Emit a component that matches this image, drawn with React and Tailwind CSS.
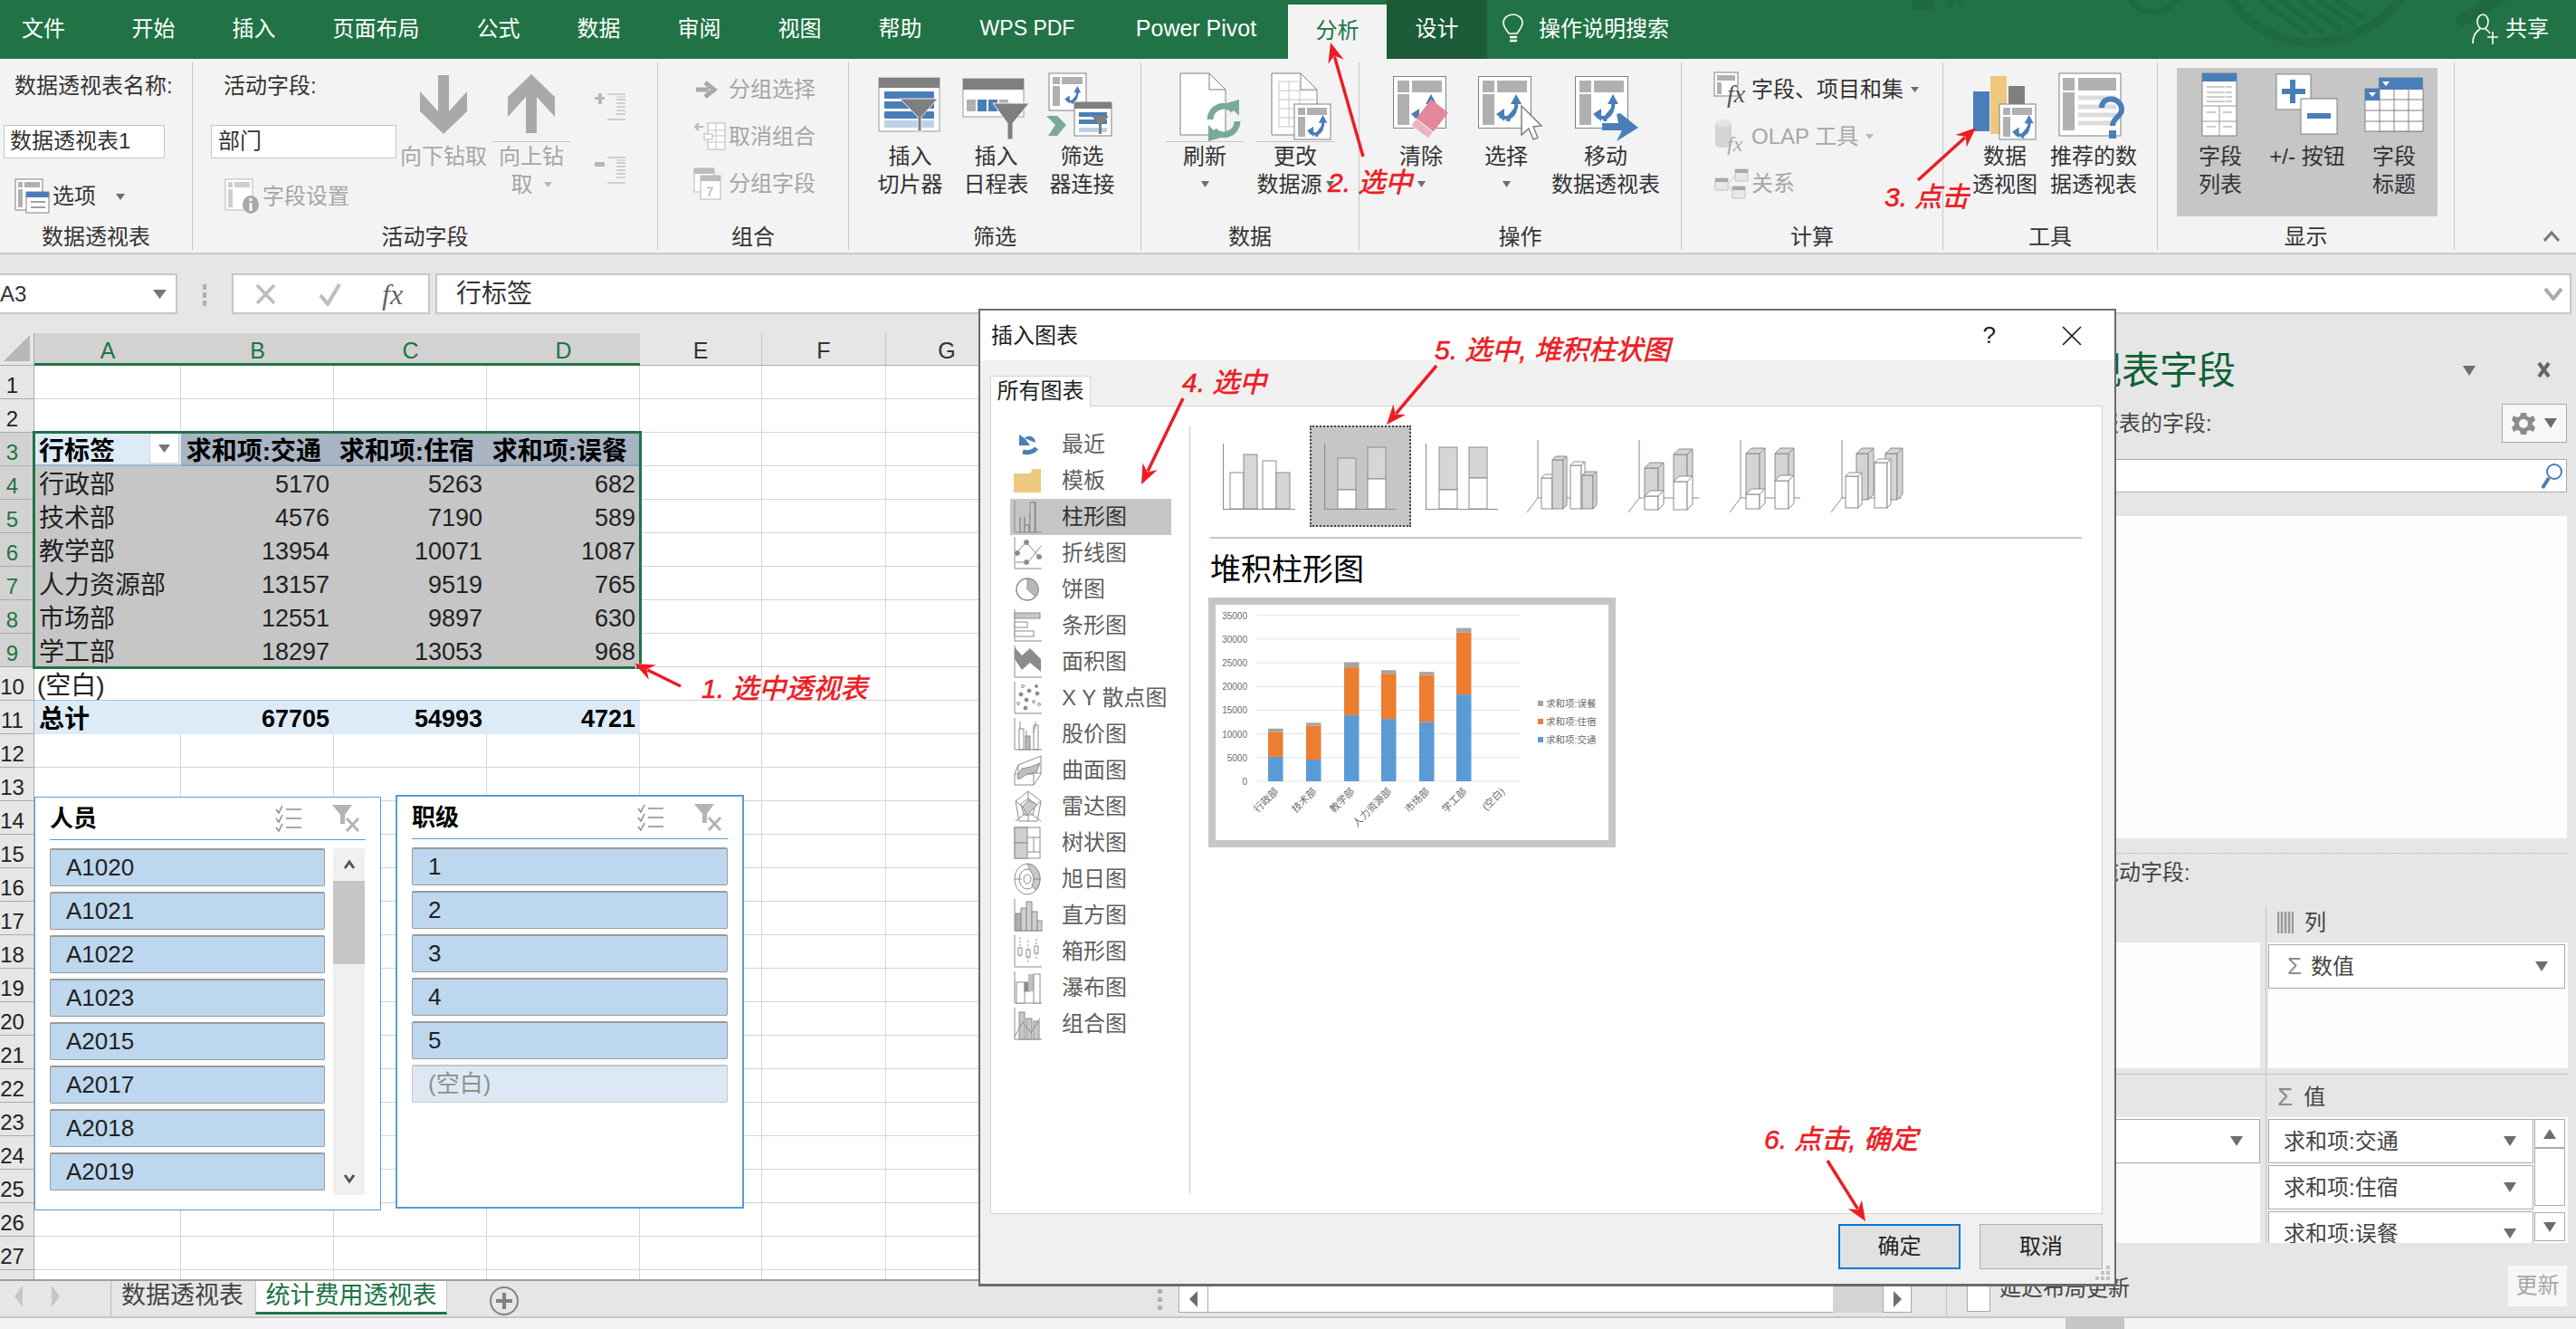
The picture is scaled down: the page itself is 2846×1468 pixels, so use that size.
const blue = "#4a7eb8";
const gr = "#808080";

const Caret = ({ w = 12, h = 8, c = "#6d6d6d" }) => (
  <svg width={w} height={h} className="shrink-0">
    <polygon points={`0,0 ${w},0 ${w / 2},${h}`} fill={c} />
  </svg>
);

// the blue swap arrows used on most pivot icons
const Swap = ({ x = 0, y = 0, s = 1 }) => (
  <g transform={`translate(${x},${y}) scale(${s})`} fill="none" stroke={blue} strokeWidth="4">
    <path d="M22 10 C24 20 14 20 13 30" />
    <path d="M4 24 C12 28 18 26 21 18" />
    <polygon points="16,11 22,0 28,11" fill={blue} stroke="none" />
    <polygon points="0,22 9,16 9,30" fill={blue} stroke="none" />
  </g>
);

const PivotDoc = ({ x = 0, y = 0 }) => (
  <g transform={`translate(${x},${y})`}>
    <rect x="0.5" y="0.5" width="58" height="57" fill="#fff" stroke={gr} />
    <rect x="5" y="5" width="13" height="13" fill="#b0b0b0" />
    <rect x="21" y="5" width="33" height="13" fill="#b0b0b0" />
    <rect x="5" y="20" width="13" height="34" fill="#b0b0b0" />
  </g>
);

const Ico = {
  options: (
    <svg width="40" height="40">
      <rect x="1" y="1" width="30" height="34" fill="#fff" stroke={gr} />
      <rect x="4" y="4" width="5" height="6" fill="#b0b0b0" />
      <rect x="11" y="4" width="17" height="6" fill="#b0b0b0" />
      <rect x="4" y="12" width="5" height="20" fill="#b0b0b0" />
      <rect x="13" y="15" width="25" height="23" fill="#fff" stroke={gr} />
      <rect x="13" y="15" width="25" height="6" fill={blue} />
      <path d="M18 26h16M18 32h16" stroke={gr} strokeWidth="1.5" />
    </svg>
  ),
  fieldSet: (
    <svg width="40" height="40">
      <rect x="1" y="1" width="30" height="34" fill="#fff" stroke="#b8b8b8" />
      <rect x="4" y="4" width="5" height="6" fill="#cfcfcf" />
      <rect x="11" y="4" width="17" height="6" fill="#cfcfcf" />
      <rect x="4" y="12" width="5" height="20" fill="#cfcfcf" />
      <ellipse cx="29" cy="29" rx="9" ry="10" fill="#a9a9a9" />
      <rect x="27.5" y="27" width="3" height="9" fill="#fff" />
      <rect x="27.5" y="22" width="3" height="3" fill="#fff" />
    </svg>
  ),
  down: (
    <svg width="54" height="66">
      <polygon points="21,0 33,0 33,40 53,18 53,40 27,65 1,40 1,18 21,40" fill="#a9a9ab" />
    </svg>
  ),
  up: (
    <svg width="54" height="66">
      <polygon points="21,65 33,65 33,25 53,47 53,25 27,0 1,25 1,47 21,25" fill="#a9a9ab" />
    </svg>
  ),
  tree: (minus) => (
    <svg width="36" height="32">
      <rect x="0" y={minus ? 6 : 4} width="11" height={minus ? 5 : 3} fill="#b8b8b8" />
      {!minus && <rect x="4" y="0" width="4" height="12" fill="#b8b8b8" />}
      <path d="M14 1h20M24 7h10M24 11h10M24 15h10M24 19h10M24 23h10M14 29h20" stroke="#c4c4c4" strokeWidth="1.5" />
      <path d="M24 4h10" stroke="#c4c4c4" />
    </svg>
  ),
  slicer: (
    <svg width="72" height="62">
      <rect x="1" y="1" width="67" height="59" fill="#fff" stroke="#9a9a9a" />
      <rect x="1" y="1" width="67" height="11" fill="#7f7f7f" />
      <rect x="7" y="16" width="55" height="8" rx="1" fill={blue} />
      <rect x="7" y="27" width="55" height="8" rx="1" fill={blue} />
      <rect x="7" y="38" width="55" height="8" rx="1" fill={blue} />
      <rect x="7" y="48" width="55" height="8" fill="#bdd0e6" />
      <polygon points="24,24 66,24 48,44 48,60 44,60 44,44" fill="#7f7f7f" stroke="#f3f3f3" />
    </svg>
  ),
  timeline: (
    <svg width="76" height="70">
      <rect x="1" y="1" width="67" height="42" fill="#fff" stroke="#9a9a9a" />
      <rect x="1" y="1" width="67" height="12" fill="#7f7f7f" />
      <rect x="5" y="24" width="10" height="13" fill="#b0b0b0" />
      <rect x="17" y="24" width="10" height="13" fill={blue} />
      <rect x="29" y="24" width="10" height="13" fill={blue} />
      <rect x="41" y="24" width="10" height="13" fill="#b0b0b0" />
      <polygon points="34,28 74,28 56,50 56,68 50,68 50,50" fill="#7f7f7f" stroke="#f3f3f3" />
    </svg>
  ),
  filterConn: (
    <svg width="76" height="72">
      <rect x="5" y="1" width="41" height="41" fill="#fff" stroke={gr} />
      <rect x="9" y="5" width="8" height="8" fill="#b0b0b0" />
      <rect x="19" y="5" width="23" height="8" fill="#b0b0b0" />
      <rect x="9" y="15" width="8" height="22" fill="#b0b0b0" />
      <Swap x="22" y="15" s="0.65" />
      <rect x="33" y="33" width="41" height="37" fill="#fff" stroke={gr} />
      <rect x="33" y="33" width="41" height="7" fill="#7f7f7f" />
      <rect x="38" y="44" width="31" height="5" fill={blue} />
      <rect x="38" y="52" width="31" height="5" fill={blue} />
      <rect x="38" y="61" width="31" height="5" fill="#bdd0e6" />
      <polygon points="52,48 71,48 63,58 63,68 60,68 60,58" fill="#7f7f7f" />
      <path d="M2 48h12l10 10-10 12H4l8-12-10-10z" fill="#7aa99a" />
    </svg>
  ),
  refresh: (
    <svg width="68" height="76">
      <path d="M1 1h32l18 18v50H1z" fill="#fff" stroke={gr} />
      <path d="M33 1v18h18" fill="none" stroke={gr} />
      <g fill="none" stroke="#7aa99a" strokeWidth="7">
        <path d="M34 52a15 15 0 0 1 26-10" />
        <path d="M64 54a15 15 0 0 1-26 10" />
      </g>
      <polygon points="52,34 66,30 66,48" fill="#7aa99a" />
      <polygon points="46,72 32,76 32,58" fill="#7aa99a" />
    </svg>
  ),
  changeSrc: (
    <svg width="68" height="76">
      <path d="M1 1h32l18 18v50H1z" fill="#fff" stroke={gr} />
      <path d="M33 1v18h18" fill="none" stroke={gr} />
      <path d="M9 10h24M9 20h40M9 30h40M9 40h40M9 50h40M9 60h40M9 10v50M20 10v50M32 10v50" stroke="#c4c4c4" />
      <rect x="26" y="35" width="40" height="39" fill="#fff" stroke={gr} />
      <rect x="30" y="39" width="8" height="8" fill="#b0b0b0" />
      <rect x="40" y="39" width="22" height="8" fill="#b0b0b0" />
      <rect x="30" y="49" width="8" height="22" fill="#b0b0b0" />
      <Swap x="40" y="47" s="0.8" />
    </svg>
  ),
  clear: (
    <svg width="72" height="72">
      <PivotDoc />
      <Swap x="20" y="20" />
      <g transform="translate(50,32) rotate(38)">
        <rect x="-10" y="0" width="24" height="36" fill="#e5879a" />
        <rect x="-10" y="27" width="24" height="9" fill="#eab3bf" stroke="#f3f3f3" />
      </g>
    </svg>
  ),
  select: (
    <svg width="72" height="72">
      <PivotDoc />
      <Swap x="20" y="20" />
      <path d="M48 33v32l8-7 5 12 5-2-5-12 9-1z" fill="#fff" stroke={gr} strokeWidth="1.5" />
    </svg>
  ),
  move: (
    <svg width="72" height="72">
      <PivotDoc />
      <Swap x="20" y="20" />
      <polygon points="30,52 48,52 46,42 50,41 70,57 46,72 52,60 30,60" fill={blue} />
    </svg>
  ),
  groupSel: (
    <svg width="34" height="28">
      <path d="M2 14h14M12 6l10 8-10 8" fill="none" stroke="#a9a9a9" strokeWidth="5" />
    </svg>
  ),
  ungroup: (
    <svg width="36" height="32">
      <path d="M2 5h9M6 1 2 5l4 4" fill="none" stroke="#b8b8b8" strokeWidth="2" />
      <rect x="16" y="1" width="19" height="29" fill="#fff" stroke="#b8b8b8" />
      <path d="M16 9h19M16 15h19M16 22h19M25 1v29" stroke="#c4c4c4" />
      <rect x="12" y="13" width="9" height="6" fill="#fff" stroke="#b8b8b8" />
    </svg>
  ),
  groupField: (
    <svg width="36" height="36">
      <rect x="1" y="1" width="22" height="26" fill="#fff" stroke="#b8b8b8" />
      <rect x="1" y="1" width="22" height="6" fill="#bcbcbc" />
      <rect x="8" y="9" width="22" height="26" fill="#fff" stroke="#b8b8b8" />
      <rect x="8" y="9" width="22" height="6" fill="#bcbcbc" />
      <text x="14" y="32" fontSize="15" fill="#a9a9a9" className="font-['Liberation_Sans']">7</text>
    </svg>
  ),
  fieldSetFx: (
    <svg width="42" height="40">
      <rect x="1" y="1" width="26" height="26" fill="#fff" stroke={gr} />
      <rect x="4" y="4" width="20" height="6" fill="#b0b0b0" />
      <rect x="4" y="12" width="5" height="13" fill="#b0b0b0" />
      <text x="15" y="34" fontSize="28" fontStyle="italic" fill="#555" className="font-['Liberation_Serif']">fx</text>
    </svg>
  ),
  olap: (
    <svg width="42" height="40">
      <path d="M2 5v24c0 4 18 4 18 0V5z" fill="#d4d4d4" />
      <ellipse cx="11" cy="5" rx="9" ry="4" fill="#e4e4e4" />
      <text x="15" y="36" fontSize="24" fontStyle="italic" fill="#a9a9a9" className="font-['Liberation_Serif']">fx</text>
    </svg>
  ),
  relation: (
    <svg width="40" height="34">
      <rect x="1" y="11" width="14" height="13" fill="#e8e8e8" stroke="#c4c4c4" />
      <rect x="23" y="1" width="14" height="13" fill="#e8e8e8" stroke="#c4c4c4" />
      <rect x="20" y="20" width="14" height="13" fill="#e8e8e8" stroke="#c4c4c4" />
      <rect x="23" y="1" width="14" height="4" fill="#a9a9a9" />
      <rect x="20" y="20" width="14" height="4" fill="#a9a9a9" />
      <rect x="1" y="11" width="14" height="4" fill="#a9a9a9" />
      <path d="M15 17 23 8M15 18l5 8" stroke="#c4c4c4" />
    </svg>
  ),
  pivotChart: (
    <svg width="72" height="74">
      <rect x="1" y="20" width="18" height="44" transform="translate(0,-2)" fill={blue} />
      <rect x="20" y="1" width="18" height="64" fill="#edc87e" />
      <rect x="40" y="12" width="18" height="34" fill="#7f7f7f" />
      <rect x="30" y="32" width="40" height="39" fill="#fff" stroke={gr} />
      <rect x="34" y="36" width="8" height="8" fill="#b0b0b0" />
      <rect x="44" y="36" width="22" height="8" fill="#b0b0b0" />
      <rect x="34" y="46" width="8" height="22" fill="#b0b0b0" />
      <Swap x="44" y="44" s="0.85" />
    </svg>
  ),
  recommend: (
    <svg width="78" height="76">
      <rect x="1" y="1" width="68" height="69" fill="#fff" stroke={gr} />
      <rect x="5" y="6" width="13" height="14" fill="#b0b0b0" />
      <rect x="22" y="6" width="42" height="14" fill="#b0b0b0" />
      <rect x="5" y="22" width="13" height="42" fill="#b0b0b0" />
      <path d="M22 28h42M22 38h42M22 47h42M22 56h42" stroke="#dcdcdc" strokeWidth="5" />
      <path d="M48 39c0-14 22-12 22 2 0 8-10 9-10 18" fill="none" stroke={blue} strokeWidth="6" />
      <rect x="56" y="64" width="8" height="9" fill={blue} />
    </svg>
  ),
  fieldList: (
    <svg width="42" height="72">
      <rect x="1" y="1" width="38" height="69" fill="#fff" stroke={gr} />
      <rect x="1" y="1" width="38" height="9" fill={blue} />
      <path d="M6 16h28M6 22h28M6 27h28M6 32h28" stroke="#9a9a9a" strokeDasharray="20 1" />
      <path d="M1 37h38M1 54h38M20 37v33M6 44h10M24 44h10M6 60h10M24 60h10" stroke="#9a9a9a" />
    </svg>
  ),
  plusMinus: (
    <svg width="70" height="70">
      <rect x="1" y="1" width="38" height="39" fill="#fff" stroke={gr} />
      <rect x="7" y="17" width="26" height="6" fill={blue} />
      <rect x="16" y="7" width="6" height="26" fill={blue} />
      <rect x="28" y="28" width="40" height="39" fill="#fff" stroke={gr} />
      <rect x="35" y="44" width="26" height="6" fill={blue} />
    </svg>
  ),
  fieldHead: (
    <svg width="66" height="62">
      <rect x="16.5" y="1" width="48" height="59" fill="#fff" stroke={gr} />
      <rect x="1" y="13" width="64" height="47" fill="#fff" stroke={gr} />
      <path d="M17 13v47M33 13v47M49 13v47M1 25h64M1 37h64M1 49h64" stroke={gr} />
      <rect x="16.5" y="1" width="48" height="13" fill={blue} />
      <rect x="1" y="13" width="16" height="13" fill={blue} />
      <polygon points="20,5 28,5 24,10" fill="#fff" />
      <polygon points="5,17 13,17 9,22" fill="#fff" />
    </svg>
  ),
};

const Group = ({ label, className, children, inner = "flex" }) => (
  <div className={`flex flex-col h-[207px] border-r border-[#c6c6c6] shrink-0 ${className}`}>
    <div className={`h-[179px] ${inner}`}>{children}</div>
    <div className="h-[28px] leading-[28px] text-center text-[24px] text-[#333]">{label}</div>
  </div>
);

const Big = ({ icon, lines, w, off, line, iconH = "h-[88px]", drop = "" }) => (
  <div className={`flex flex-col items-center shrink-0 ${w}`}>
    <div className={`${iconH} flex items-center justify-center w-full relative`}>
      <div className={`relative ${drop}`}>{icon}</div>
      {line && <div className={`absolute bottom-0 h-[1px] bg-[#c6c6c6] ${line}`} />}
    </div>
    <div className={`text-[24px] leading-[31px] text-center whitespace-nowrap ${off ? "text-[#a6a6a6]" : "text-[#333]"}`}>
      {lines.map((l, i) => (
        <div key={i} className="h-[31px] flex items-center justify-center gap-[12px]">{l}</div>
      ))}
    </div>
  </div>
);

const SmallRow = ({ icon, text, off, iconW = "w-[38px]", caret }) => (
  <div className={`h-[52px] flex items-center text-[24px] whitespace-nowrap ${off ? "text-[#a6a6a6]" : "text-[#333]"}`}>
    <div className={`${iconW} flex justify-center shrink-0`}>{icon}</div>
    <span>{text}</span>
    {caret && <span className="ml-[8px]"><Caret w={9} h={6} c={off ? "#b8b8b8" : "#6d6d6d"} /></span>}
  </div>
);

function Ribbon() {
  return (
    <div className="h-[216px] bg-[#f3f3f3] border-b-2 border-[#c9c9c9] flex pt-[4px] shrink-0">
      <Group label="数据透视表" className="w-[213px]" inner="flex flex-col">
        <div className="h-[52px] pt-[10px] pl-[16px] text-[24px] leading-[31px] text-[#333] whitespace-nowrap">数据透视表名称:</div>
        <div className="ml-[4px] mt-[17px] w-[178px] h-[37px] bg-white border border-[#c6c6c6] pl-[6px] text-[24px] leading-[34px] text-[#333]">数据透视表1</div>
        <div className="flex items-center mt-[22px] pl-[16px] text-[24px] text-[#333]">
          {Ico.options}
          <span className="ml-[2px]">选项</span>
          <span className="ml-[22px]"><Caret w={10} h={7} /></span>
        </div>
      </Group>
      <Group label="活动字段" className="w-[514px]">
        <div className="w-[228px] shrink-0 flex flex-col">
          <div className="h-[52px] pt-[10px] pl-[34px] text-[24px] leading-[31px] text-[#333]">活动字段:</div>
          <div className="ml-[20px] mt-[17px] w-[205px] h-[37px] bg-white border border-[#c6c6c6] pl-[7px] text-[24px] leading-[34px] text-[#333]">部门</div>
          <div className="flex items-center mt-[22px] pl-[35px] text-[24px] text-[#a6a6a6]">
            {Ico.fieldSet}
            <span className="ml-[2px]">字段设置</span>
          </div>
        </div>
        <Big w="w-[98px]" off icon={Ico.down} drop="top-[3px]" lines={["向下钻取"]} />
        <Big w="w-[96px]" off icon={Ico.up} drop="top-[2px]" line="w-[86px]" lines={["向上钻", <>取<Caret w={9} h={6} c="#b8b8b8" /></>]} />
        <div className="flex flex-col gap-[38px] pt-[34px] pl-[22px]">
          {Ico.tree(false)}
          {Ico.tree(true)}
        </div>
      </Group>
      <Group label="组合" className="w-[211px]" inner="flex flex-col pt-[4px] pl-[36px]">
        <SmallRow off icon={Ico.groupSel} text="分组选择" iconW="w-[42px]" />
        <SmallRow off icon={Ico.ungroup} text="取消组合" iconW="w-[42px]" />
        <SmallRow off icon={Ico.groupField} text="分组字段" iconW="w-[42px]" />
      </Group>
      <Group label="筛选" className="w-[323px]" inner="flex pl-[20px]">
        <Big w="w-[95px]" icon={Ico.slicer} drop="top-[3px]" lines={["插入", "切片器"]} />
        <Big w="w-[95px]" icon={Ico.timeline} drop="top-[8px]" lines={["插入", "日程表"]} />
        <Big w="w-[95px]" icon={Ico.filterConn} drop="top-[3px] -left-[4px]" lines={["筛选", "器连接"]} />
      </Group>
      <Group label="数据" className="w-[241px]" inner="flex pl-[20px]">
        <Big w="w-[100px]" icon={Ico.refresh} drop="top-[5px] left-[6px]" line="w-[86px]" lines={["刷新", <Caret w={9} h={7} />]} />
        <Big w="w-[100px]" icon={Ico.changeSrc} drop="top-[5px] left-[7px]" line="w-[88px]" lines={["更改", <span className="flex items-center gap-[4px]">数据源<Caret w={9} h={7} /></span>]} />
      </Group>
      <Group label="操作" className="w-[356px]" inner="flex pl-[21px]">
        <Big w="w-[94px]" icon={Ico.clear} drop="top-[7px] left-[5px]" lines={["清除", <Caret w={9} h={7} />]} />
        <Big w="w-[94px]" icon={Ico.select} drop="top-[7px] left-[5px]" lines={["选择", <Caret w={9} h={7} />]} />
        <Big w="w-[126px]" icon={Ico.move} drop="top-[7px] left-[2px]" lines={["移动", "数据透视表"]} />
      </Group>
      <Group label="计算" className="w-[289px]" inner="flex flex-col pt-[4px] pl-[35px]">
        <SmallRow icon={Ico.fieldSetFx} text="字段、项目和集" iconW="w-[42px]" caret />
        <SmallRow off icon={Ico.olap} text="OLAP 工具" iconW="w-[42px]" caret />
        <SmallRow off icon={Ico.relation} text="关系" iconW="w-[42px]" />
      </Group>
      <Group label="工具" className="w-[237px]" inner="flex pl-[19px]">
        <Big w="w-[98px]" icon={Ico.pivotChart} drop="top-[7px]" lines={["数据", "透视图"]} />
        <Big w="w-[98px]" icon={Ico.recommend} drop="top-[5px]" lines={["推荐的数", "据透视表"]} />
      </Group>
      <Group label="显示" className="w-[328px]" inner="flex pl-[21px]">
        <div className="mt-[6px] w-[288px] h-[164px] bg-[#c6c6c6] flex">
          <Big w="w-[96px]" iconH="h-[82px]" icon={Ico.fieldList} lines={["字段", "列表"]} />
          <Big w="w-[96px]" iconH="h-[82px]" icon={Ico.plusMinus} lines={["+/- 按钮"]} />
          <Big w="w-[96px]" iconH="h-[82px]" icon={Ico.fieldHead} lines={["字段", "标题"]} />
        </div>
      </Group>
      <div className="flex-1 flex items-end justify-end pr-[18px] pb-[12px]">
        <svg width="18" height="12"><path d="M1 11 9 2l8 9" fill="none" stroke="#777" strokeWidth="3" /></svg>
      </div>
    </div>
  );
}

function TabBar() {
  const tabs = ["开始", "插入", "页面布局", "公式", "数据", "审阅", "视图", "帮助"];
  return (
    <div className="h-[65px] bg-[#217346] flex text-white text-[24px] shrink-0 relative overflow-hidden">
      {/* background decoration of the title bar */}
      <svg className="absolute top-0 left-[2050px]" width="796" height="65" fill="none" stroke="#1f6a40">
        <rect x="62" y="-2" width="25" height="13" fill="#1f6a40" stroke="none" />
        <rect x="101" y="-2" width="8" height="10" fill="#1f6a40" stroke="none" />
        <rect x="113" y="-2" width="4" height="8" fill="#1f6a40" stroke="none" />
        <path d="M300 -6C312 20 345 20 358 -6" strokeWidth="6" />
        <path d="M414 -2C440 38 480 47 508 47C540 47 580 30 602 -2" strokeWidth="10" />
        <path d="M447 0 500 38M470 0 518 37M490 0 537 33M510 0 553 28M530 0 563 21" strokeWidth="6" />
        <path d="M665 25 716 -5" strokeWidth="14" />
      </svg>
      <div className="pl-[24px] pr-[42px] leading-[63px]">文件</div>
      {tabs.map((t) => (
        <div key={t} className="px-[31.5px] leading-[63px]">{t}</div>
      ))}
      <div className="w-[170px] text-center leading-[63px] text-[23px]">WPS PDF</div>
      <div className="w-[203px] text-center leading-[63px] text-[25px]">Power Pivot</div>
      <div className="w-[109px] mt-[5px] bg-[#f3f3f3] text-[#217346] text-center leading-[58px] relative">分析</div>
      <div className="w-[111px] bg-[#1c5c38] text-center leading-[63px]">设计</div>
      <div className="flex items-center ml-[16px] h-[63px]">
        <svg width="26" height="34" fill="none" stroke="#fff" strokeWidth="1.6">
          <path d="M8 22C5 17 2 15 2 10a10.500 9 0 0 1 21 0c0 5-3 7-6 12z" />
          <path d="M9 26h8M9 30h8" strokeWidth="2.500" />
        </svg>
        <span className="ml-[15px]">操作说明搜索</span>
      </div>
      <div className="absolute left-[2731px] top-0 h-[63px] flex items-center">
        <svg width="30" height="34" fill="none" stroke="#fff" strokeWidth="1.6">
          <ellipse cx="12" cy="9" rx="6" ry="8" />
          <path d="M1 33c0-8 3-13 8-16M15 17c2 1 4 3 5 5M17 26h12M23 20v14" />
        </svg>
        <span className="ml-[7px]">共享</span>
      </div>
    </div>
  );
}

function FormulaBar() {
  return (
    <div className="h-[69px] bg-[#e6e6e6] pt-[21px] flex shrink-0">
      <div className="w-[196px] h-[45px] bg-white border-y-2 border-r-2 border-[#c6c6c6] flex items-center justify-between pr-[10px] text-[24px] text-[#333]">
        <span>A3</span>
        <Caret w={15} h={10} c="#777" />
      </div>
      <div className="w-[60px] flex flex-col items-center justify-center gap-[3px]">
        <div className="w-[4px] h-[6px] bg-[#b0b0b0]" />
        <div className="w-[4px] h-[6px] bg-[#b0b0b0]" />
        <div className="w-[4px] h-[6px] bg-[#b0b0b0]" />
      </div>
      <div className="w-[219px] h-[45px] bg-white border-2 border-[#c6c6c6] flex items-center">
        <svg className="ml-[24px]" width="24" height="24"><path d="M2 2 21 22M21 2 2 22" stroke="#bdbdbd" strokeWidth="3.500" /></svg>
        <svg className="ml-[46px]" width="26" height="26"><path d="M2 14l8 10L23 2" fill="none" stroke="#bdbdbd" strokeWidth="4" /></svg>
        <span className="ml-[44px] text-[32px] leading-none italic text-[#666] font-['Liberation_Serif',serif]">fx</span>
      </div>
      <div className="ml-[6px] w-[2360px] h-[45px] bg-white border-2 border-[#c6c6c6] flex items-center justify-between pl-[21px] pr-[8px] text-[28px] text-[#333]">
        <span>行标签</span>
        <svg width="20" height="14"><path d="M1 1l9 11 9-11" fill="none" stroke="#aaa" strokeWidth="4" /></svg>
      </div>
    </div>
  );
}

const colW = ["w-[162px]", "w-[169px]", "w-[169px]", "w-[169px]", "w-[135px]", "w-[137px]", "w-[135px]", "w-[135px]", "w-[135px]"];

const pivot = {
  4: ["行政部", "5170", "5263", "682"],
  5: ["技术部", "4576", "7190", "589"],
  6: ["教学部", "13954", "10071", "1087"],
  7: ["人力资源部", "13157", "9519", "765"],
  8: ["市场部", "12551", "9897", "630"],
  9: ["学工部", "18297", "13053", "968"],
};

function Row({ n }) {
  const sel = n >= 3 && n <= 9;
  const data = pivot[n];
  return (
    <div className="flex h-[37px]">
      <div className={`w-[38px] shrink-0 border-r border-b border-[#ababab] overflow-hidden text-[24px] leading-[44px] ${sel ? "bg-[#d2d2d2] text-[#217346]" : "bg-[#e6e6e6] text-[#222]"}`}>
        <div className="w-[27px] text-center">{n}</div>
      </div>
      {colW.map((w, i) => {
        let cls = "border-r border-b border-[#d4d4d4]";
        let body = null;
        if (i < 4 && n === 3) {
          cls = i === 0 ? "bg-[#ddebf7] border-b-2 border-[#9bb7d4]" : "bg-[#a9b4c2] border-b-2 border-[#8fa5be]";
          body =
            i === 0 ? (
              <div className="flex h-full">
                <span className="pl-[5px] flex-1 font-bold text-[28px] leading-[41px] text-black">行标签</span>
                <span className="w-[33px] h-[34px] bg-white border border-[#d4d4d4] flex items-center justify-center mr-[2px]">
                  <Caret w={13} h={9} c="#777" />
                </span>
              </div>
            ) : (
              <div className="text-right pr-[14px] font-bold text-[28px] leading-[41px] whitespace-nowrap text-black">
                {["求和项:交通", "求和项:住宿", "求和项:误餐"][i - 1]}
              </div>
            );
        } else if (i < 4 && data) {
          cls = "bg-[#c6c6c6]";
          body = <div className={`${i === 0 ? "pl-[5px] text-[28px]" : "text-right pr-[5px] text-[27px]"} leading-[41px] text-[#222]`}>{data[i]}</div>;
        } else if (i === 0 && n === 10) {
          body = <div className="pl-[3px] text-[28px] leading-[41px] text-[#222]">(空白)</div>;
          cls = "border-b border-[#9bc2e6]";
        } else if (i < 4 && n === 10) {
          cls = "border-b border-[#9bc2e6]";
        } else if (i < 4 && n === 11) {
          cls = "bg-[#ddebf7]";
          body = (
            <div className={`${i === 0 ? "pl-[5px] text-[28px]" : "text-right pr-[5px] text-[27px]"} font-bold leading-[41px] text-black`}>
              {["总计", "67705", "54993", "4721"][i]}
            </div>
          );
        }
        return <div key={i} className={`${w} shrink-0 h-full ${cls}`}>{body}</div>;
      })}
    </div>
  );
}

const CheckList = () => (
  <svg width="30" height="30" fill="none" stroke="#8c8c8c" strokeWidth="1.5">
    <path d="M1 5l3 4 4-8M1 15l3 4 4-8M1 25l3 4 4-8M12 5h17M12 15h17M12 25h17" />
  </svg>
);
const FilterClear = () => (
  <svg width="34" height="32">
    <polygon points="1,1 23,1 15,12 15,22 10,22 10,12" fill="#b4b4b4" />
    <path d="M17 16 30 30M30 16 17 30" stroke="#b4b4b4" strokeWidth="3" />
  </svg>
);

const SlicerItem = ({ t, dim }) => (
  <div className={`h-[42px] rounded-[2px] pl-[17px] text-[26px] leading-[38px] border border-t-2 ${dim ? "bg-[#dce9f5] border-[#c6c6c6] text-[#8f8f8f]" : "bg-[#bdd7ee] border-[#9a9a9a] text-[#222]"}`}>{t}</div>
);

function Slicers() {
  return (
    <>
      <div className="absolute left-[38px] top-[530px] w-[383px] h-[457px] bg-white border border-[#5b9bd5] px-[16px]">
        <div className="h-[47px] border-b border-[#5b9bd5] flex items-center font-bold text-[26px] text-black">
          <span className="flex-1">人员</span>
          <CheckList />
          <span className="ml-[32px] mr-[4px]"><FilterClear /></span>
        </div>
        <div className="flex mt-[9px]">
          <div className="w-[304px] flex flex-col gap-[6px]">
            {["A1020", "A1021", "A1022", "A1023", "A2015", "A2017", "A2018", "A2019"].map((t) => (
              <SlicerItem key={t} t={t} />
            ))}
          </div>
          <div className="ml-[9px] w-[35px] h-[383px] bg-[#f0f0f0] flex flex-col items-center">
            <div className="h-[36px] flex items-center">
              <svg width="14" height="12"><path d="M2 10l5-7 5 7" fill="none" stroke="#555" strokeWidth="3" /></svg>
            </div>
            <div className="w-full h-[92px] bg-[#c6c6c6]" />
            <div className="mt-auto h-[36px] flex items-center">
              <svg width="14" height="12"><path d="M2 2l5 7 5-7" fill="none" stroke="#555" strokeWidth="3" /></svg>
            </div>
          </div>
        </div>
      </div>
      <div className="absolute left-[437px] top-[528px] w-[385px] h-[457px] bg-white border-2 border-[#5b9bd5] px-[16px]">
        <div className="h-[47px] border-b border-[#5b9bd5] flex items-center font-bold text-[26px] text-black">
          <span className="flex-1">职级</span>
          <CheckList />
          <span className="ml-[32px] mr-[4px]"><FilterClear /></span>
        </div>
        <div className="flex flex-col gap-[6px] mt-[9px]">
          {["1", "2", "3", "4", "5"].map((t) => (
            <SlicerItem key={t} t={t} />
          ))}
          <SlicerItem t="(空白)" dim />
        </div>
      </div>
    </>
  );
}

function Sheet() {
  const rows = Array.from({ length: 28 }, (_, i) => i + 1);
  return (
    <div className="w-[2150px] shrink-0 flex flex-col relative overflow-hidden">
      <div className="h-[18px] bg-[#e6e6e6] shrink-0" />
      <div className="flex h-[36px] shrink-0 bg-[#e6e6e6] text-[25px] text-[#333]">
        <div className="w-[38px] relative border-r border-b border-[#ababab]">
          <svg className="absolute right-[3px] bottom-[3px]" width="30" height="30"><polygon points="29,0 29,29 0,29" fill="#b8b8b8" /></svg>
        </div>
        {["A", "B", "C", "D", "E", "F", "G", "H", "I"].map((c, i) => (
          <div key={c} className={`${colW[i]} shrink-0 text-center leading-[38px] ${i < 4 ? "bg-[#d2d2d2] border-b-[3px] border-[#217346] text-[#217346] border-r-0" : "border-b border-[#ababab] border-r border-r-[#c6c6c6]"}`}>{c}</div>
        ))}
      </div>
      <div className="h-[1009px] overflow-hidden shrink-0 bg-white">
        {rows.map((n) => <Row key={n} n={n} />)}
      </div>
      <div className="absolute left-[36px] top-[126px] w-[673px] h-[263px] border-[3px] border-[#217346]" />
      <div className="absolute left-[702px] top-[383px] w-[7px] h-[7px] bg-[#217346] border border-white" />
      <Slicers />
      <div className="h-[41px] shrink-0 border-t-2 border-[#9e9e9e] bg-[#e6e6e6] flex text-[27px]">
        <div className="w-[123px] shrink-0 flex items-center gap-[30px] pl-[16px] pb-[6px] border-r border-[#bbb]">
          <svg width="10" height="24"><polygon points="9,0 9,24 0,12" fill="#c6c6c6" /></svg>
          <svg width="10" height="24"><polygon points="1,0 1,24 10,12" fill="#c6c6c6" /></svg>
        </div>
        <div className="ml-[11px] w-[148px] text-[#444] leading-[33px] whitespace-nowrap">数据透视表</div>
        <div className="w-[212px] h-[37px] bg-white border-x border-[#c6c6c6] border-b-[3px] border-b-[#217346] text-[#217346] leading-[33px] text-center whitespace-nowrap">统计费用透视表</div>
        <div className="ml-[47px] mt-[6px]">
          <svg width="32" height="32" fill="none" stroke="#808080" strokeWidth="2">
            <circle cx="16" cy="16" r="15" />
            <path d="M16 7v18M7 16h18" strokeWidth="4" />
          </svg>
        </div>
        <div className="ml-auto flex h-[30px] mt-[5px] mr-[38px]">
          <div className="w-[26px] flex flex-col items-center justify-center gap-[4px] mr-[8px]">
            <div className="w-[5px] h-[5px] bg-[#b0b0b0]" />
            <div className="w-[5px] h-[5px] bg-[#b0b0b0]" />
            <div className="w-[5px] h-[5px] bg-[#b0b0b0]" />
          </div>
          <div className="w-[33px] bg-white border border-[#ababab] flex items-center justify-center">
            <svg width="10" height="18"><polygon points="9,0 9,18 0,9" fill="#6d6d6d" /></svg>
          </div>
          <div className="w-[690px] bg-white border-y border-[#ababab]" />
          <div className="w-[55px] bg-[#d4d4d4]" />
          <div className="w-[32px] bg-white border border-[#ababab] flex items-center justify-center">
            <svg width="10" height="18"><polygon points="1,0 1,18 10,9" fill="#6d6d6d" /></svg>
          </div>
        </div>
      </div>
    </div>
  );
}

const Chip = ({ t, w = "w-[293px]", h = "h-[49px]", icon, pad = "pl-[16px]" }) => (
  <div className={`${w} ${h} shrink-0 bg-white border border-[#ababab] flex items-center justify-between pr-[18px] text-[24px] text-[#444] overflow-hidden ${pad}`}>
    <span className="flex items-center gap-[10px]">{icon}{t}</span>
    <Caret w={14} h={11} />
  </div>
);

function Panel() {
  return (
    <div className="w-[696px] shrink-0 bg-[#e6e6e6] border-l border-[#c6c6c6] flex flex-col pl-[22px] pr-[10px]">
      <div className="mt-[28px] h-[62px] flex items-center text-[42px] text-[#0e6135] shrink-0">
        <span className="pl-[3px]">数据透视表字段</span>
        <span className="ml-[251px]"><Caret w={14} h={11} /></span>
        <svg className="ml-[68px]" width="16" height="20"><path d="M2 2l11 15M13 2 2 17" stroke="#666" strokeWidth="4" /></svg>
      </div>
      <div className="mt-[6px] h-[43px] flex items-center justify-between text-[24px] text-[#444] shrink-0">
        <span>选择要添加到报表的字段:</span>
        <div className="w-[72px] h-[43px] bg-[#f7f7f7] border border-[#ababab] flex items-center justify-center gap-[10px]">
          <svg width="26" height="26" viewBox="0 0 26 26"><path d="M10 1h6l1 4 3 1 4-2 2 5-3 3v2l3 3-2 5-4-2-3 1-1 4h-6l-1-4-3-1-4 2-2-5 3-3v-2L0 9l2-5 4 2 3-1z" fill="#8c8c8c" /><circle cx="13" cy="13" r="5" fill="#f7f7f7" /></svg>
          <Caret w={14} h={11} />
        </div>
      </div>
      <div className="mt-[18px] h-[37px] bg-white border border-[#ababab] flex items-center justify-end pr-[3px] shrink-0">
        <svg width="26" height="32" fill="none" stroke={blue}>
          <circle cx="16" cy="11" r="8" strokeWidth="2" />
          <path d="M10 18 3 29" strokeWidth="4" />
        </svg>
      </div>
      <div className="mt-[26px] h-[356px] bg-[#fdfdfd] shrink-0" />
      <div className="mt-[16px] border-t border-dotted border-[#aaa] shrink-0" />
      <div className="mt-[7px] h-[28px] leading-[28px] text-[24px] text-[#444] shrink-0">在以下区域间拖动字段:</div>
      <div className="mt-[22px] grid grid-cols-[331px_333px] shrink-0">
        <div className="border-r border-[#c6c6c6] pr-[6px]">
          <div className="h-[41px] text-[24px] text-[#444] leading-[41px]">筛选</div>
          <div className="h-[139px] bg-[#fdfdfd]" />
        </div>
        <div className="pl-[2px]">
          <div className="h-[41px] flex items-center gap-[12px] pl-[10px] pb-[4px] text-[24px] text-[#444]">
            <svg width="18" height="24"><path d="M1 0v24M5 0v24M9 0v24M13 0v24M17 0v24" stroke="#9a9a9a" strokeWidth="2.500" /></svg>
            列
          </div>
          <div className="h-[139px] bg-[#fdfdfd] pt-[2px]">
            <Chip t="数值" w="w-[328px]" pad="pl-[20px]" icon={<span className="text-[#8c8c8c] text-[26px]">Σ</span>} />
          </div>
        </div>
        <div className="col-span-2 h-[17px] relative">
          <div className="absolute left-0 right-0 top-[6px] border-t border-[#c6c6c6]" />
          <div className="absolute left-[330px] top-0 h-[17px] border-l border-[#c6c6c6]" />
        </div>
        <div className="border-r border-[#c6c6c6] pr-[6px]">
          <div className="h-[37px] text-[24px] text-[#444] leading-[37px]">行</div>
          <div className="h-[139px] bg-[#fdfdfd] pt-[2px]">
            <Chip t="行标签" w="w-[324px]" />
          </div>
        </div>
        <div className="pl-[2px]">
          <div className="h-[37px] flex items-center gap-[12px] pl-[10px] pb-[8px] text-[24px] text-[#444]">
            <span className="text-[#8c8c8c] text-[28px]">Σ</span>值
          </div>
          <div className="h-[139px] bg-[#fdfdfd] pt-[2px] flex overflow-hidden">
            <div className="flex flex-col gap-[2px] w-[293px] shrink-0">
              <Chip t="求和项:交通" />
              <Chip t="求和项:住宿" />
              <Chip t="求和项:误餐" />
            </div>
            <div className="w-[34px] ml-[1px] flex flex-col">
              <div className="h-[32px] bg-white border border-[#ababab] flex items-center justify-center">
                <svg width="14" height="11"><polygon points="0,11 14,11 7,0" fill="#6d6d6d" /></svg>
              </div>
              <div className="h-[64px] bg-white border border-[#ababab]" />
              <div className="mt-[7px] h-[32px] bg-white border border-[#ababab] flex items-center justify-center">
                <svg width="14" height="11"><polygon points="0,0 14,0 7,11" fill="#6d6d6d" /></svg>
              </div>
            </div>
          </div>
        </div>
      </div>
      <div className="flex-1 flex items-start">
        <div className="mt-[47px] w-[26px] h-[29px] bg-white border border-[#ababab] shrink-0" />
        <span className="ml-[10px] mt-[36px] text-[24px] leading-[28px] text-[#444]">延迟布局更新</span>
        <div className="ml-auto mt-[25px] w-[65px] h-[45px] bg-[#f7f7f7] text-[#a6a6a6] text-[24px] text-center leading-[44px]">更新</div>
      </div>
    </div>
  );
}

const Bar3D = ({ x, y, w, h, d = 6, fill = "#d4d4d4" }) => (
  <g stroke="#8c8c8c" strokeWidth="1">
    <rect x={x} y={y} width={w} height={h} fill={fill} />
    <polygon points={`${x},${y} ${x + d},${y - d} ${x + w + d},${y - d} ${x + w},${y}`} fill={fill} />
    <polygon points={`${x + w},${y} ${x + w + d},${y - d} ${x + w + d},${y + h - d} ${x + w},${y + h}`} fill={fill} />
  </g>
);

const Axes2D = () => <path d="M0.500 0V72.500H80" fill="none" stroke="#8c8c8c" strokeWidth="1.200" />;
const Axes3D = () => <path d="M12 0V64M12 64 0 80M12 64H78" fill="none" stroke="#8c8c8c" />;
const R = ({ x, y, w, b, f }) => <rect x={x} y={y} width={w} height={b - y} fill={f} stroke="#8c8c8c" />;
const Wt = "#fff";
const Gy = "#d6d6d6";

const typeIcons = [
  <svg key="0" width="80" height="73"><Axes2D /><R x={8} y={32} w={15} b={72} f={Wt} /><R x={23} y={12} w={15} b={72} f={Gy} /><R x={44} y={19} w={15} b={72} f={Wt} /><R x={59} y={32} w={15} b={72} f={Gy} /></svg>,
  <svg key="1" width="80" height="73"><Axes2D /><R x={15} y={16} w={20} b={51} f={Gy} /><R x={15} y={51} w={20} b={72} f={Wt} /><R x={48} y={4} w={20} b={39} f={Gy} /><R x={48} y={39} w={20} b={72} f={Wt} /></svg>,
  <svg key="2" width="80" height="73"><Axes2D /><R x={15} y={4} w={20} b={51} f={Gy} /><R x={15} y={51} w={20} b={72} f={Wt} /><R x={48} y={4} w={20} b={38} f={Gy} /><R x={48} y={38} w={20} b={72} f={Wt} /></svg>,
  <svg key="3" width="80" height="80"><Axes3D /><Bar3D x={16} y={42} w={12} h={34} d={4} fill={Wt} /><Bar3D x={28} y={22} w={12} h={54} d={4} /><Bar3D x={48} y={28} w={12} h={48} d={4} fill={Wt} /><Bar3D x={61} y={39} w={12} h={37} d={4} /></svg>,
  <svg key="4" width="80" height="80"><Axes3D /><Bar3D x={18} y={31} w={15} h={31} /><Bar3D x={18} y={62} w={15} h={15} fill={Wt} /><Bar3D x={50} y={16} w={15} h={30} /><Bar3D x={50} y={46} w={15} h={31} fill={Wt} /></svg>,
  <svg key="5" width="80" height="80"><Axes3D /><Bar3D x={18} y={15} w={15} h={45} /><Bar3D x={18} y={60} w={15} h={16} fill={Wt} /><Bar3D x={50} y={15} w={15} h={30} /><Bar3D x={50} y={45} w={15} h={31} fill={Wt} /></svg>,
  <svg key="6" width="80" height="80"><Axes3D /><Bar3D x={28} y={15} w={13} h={51} /><Bar3D x={60} y={15} w={13} h={51} /><Bar3D x={16} y={40} w={14} h={35} d={4} fill={Wt} /><Bar3D x={48} y={25} w={14} h={50} d={4} fill={Wt} /></svg>,
];

const S = "#8c8c8c";
const listIcons = [
  <svg key="a" width="30" height="30"><path d="M12 8C17 3 24 7 24 13M12 8l6 8H6V4z" fill={blue} /><path d="M25 19a12 9 0 0 1-15 4" fill="none" stroke={blue} strokeWidth="5" /></svg>,
  <svg key="b" width="30" height="28"><path d="M0 6h18l3-5h9v26H0z" fill="#edc87e" /></svg>,
  <svg key="c" width="32" height="36" fill="none" stroke={S}><path d="M1 0v35h30" /><path d="M7 18v17M12 18v17M12 27h5v8M18 14v21M18 2h6v33" strokeWidth="1.500" /><rect x="18" y="2" width="5" height="33" fill="#c8c8c8" /></svg>,
  <svg key="d" width="32" height="36" fill="none" stroke={S}><path d="M1 0v35h30" /><path d="M2 18 14 6l14 16M2 28h14l14-18" /><circle cx="14" cy="6" r="2.500" fill={S} /><circle cx="28" cy="22" r="2.500" fill={S} /><circle cx="4" cy="18" r="2.500" fill={S} /><circle cx="14" cy="28" r="2.500" fill={S} /></svg>,
  <svg key="e" width="30" height="30"><circle cx="15" cy="15" r="12" fill="#fff" stroke={S} strokeWidth="1.500" /><path d="M15 3a12 12 0 0 1 9 20l-9-8z" fill="#b8b8b8" stroke={S} /></svg>,
  <svg key="f" width="32" height="36" fill="none" stroke={S}><path d="M1 0v35h30" /><rect x="1" y="4" width="28" height="6" fill="#c8c8c8" /><rect x="1" y="14" width="14" height="6" fill="#fff" /><rect x="1" y="24" width="21" height="6" fill="#fff" /></svg>,
  <svg key="g" width="32" height="36"><path d="M1 0v35h30" fill="none" stroke={S} /><path d="M1 2l8 9 9-8 12 12v14l-12-10-9 8-8-12z" fill="#8c8c8c" /></svg>,
  <svg key="h" width="32" height="36" fill="none" stroke={S}><path d="M1 0v35h30" /><circle cx="10" cy="5" r="1.500" /><circle cx="25" cy="5" r="1.500" fill={S} /><circle cx="8" cy="14" r="2" fill={S} /><circle cx="17" cy="10" r="2" fill={S} /><circle cx="26" cy="13" r="2" fill={S} /><circle cx="5" cy="24" r="1.500" /><circle cx="14" cy="20" r="2" fill={S} /><circle cx="22" cy="22" r="1.500" /><circle cx="28" cy="25" r="1.500" /><circle cx="13" cy="29" r="2" fill={S} /></svg>,
  <svg key="i" width="32" height="36" fill="none" stroke={S}><path d="M1 0v35h30" /><path d="M7 4v8M14 14v8M22 10v6M24 4v8" /><rect x="6" y="12" width="5" height="23" /><rect x="13" y="20" width="5" height="15" fill="#b8b8b8" /><rect x="22" y="8" width="5" height="27" /></svg>,
  <svg key="j" width="32" height="36" fill="none" stroke={S}><path d="M1 22 5 12 30 2v20L22 34H1z" /><path d="M5 12v9h25M1 22h21v12" /><path d="M4 24l5-8 10-2 10-4-4 10-10 2-10 6z" fill="#c0c0c0" /></svg>,
  <svg key="k" width="32" height="36" fill="none" stroke={S}><polygon points="16,1 30,12 26,34 6,34 2,12" /><polygon points="16,9 24,15 21,27 11,27 8,15" /><path d="M16 1v33M2 12l28 22M30 12 2 34" /><polygon points="16,11 26,16 14,28 10,18" fill="#c8c8c8" /></svg>,
  <svg key="l" width="30" height="36" fill="none" stroke={S}><rect x="1" y="1" width="28" height="34" /><rect x="1" y="1" width="14" height="17" fill="#d0d0d0" /><rect x="1" y="18" width="14" height="17" fill="#d0d0d0" /><path d="M15 12h14M15 28h14M22 12v16" /></svg>,
  <svg key="m" width="30" height="36" fill="none" stroke={S}><ellipse cx="15" cy="18" rx="14" ry="17" /><ellipse cx="15" cy="18" rx="9" ry="11" /><ellipse cx="15" cy="18" rx="4" ry="5" /><path d="M15 1a14 17 0 0 1 14 17 14 17 0 0 1-5 12l-4-5a9 11 0 0 0-1-15z" fill="#c8c8c8" /><path d="M1 18h8M21 18h8" /></svg>,
  <svg key="n" width="32" height="36" stroke={S}><path d="M1 0v35h30" fill="none" /><rect x="2" y="16" width="6" height="19" fill="#b0b0b0" /><rect x="8" y="10" width="6" height="25" fill="#d0d0d0" /><rect x="14" y="3" width="6" height="32" fill="#d0d0d0" /><rect x="20" y="14" width="6" height="21" fill="#d0d0d0" /><rect x="26" y="24" width="5" height="11" fill="#d0d0d0" /></svg>,
  <svg key="o" width="32" height="36" fill="none" stroke={S}><path d="M1 0v35h30" /><rect x="5" y="14" width="4" height="8" /><rect x="14" y="16" width="4" height="8" /><rect x="23" y="12" width="4" height="8" /><path d="M7 2v12M7 22v4M16 6v10M16 24v6M25 4v8M25 20v8" strokeDasharray="2 2" /></svg>,
  <svg key="p" width="32" height="36" stroke={S}><path d="M1 0v35h30" fill="none" /><rect x="3" y="12" width="9" height="23" fill="#fff" /><rect x="12" y="12" width="6" height="10" fill="#8c8c8c" /><rect x="16" y="3" width="6" height="19" fill="#c0c0c0" stroke="none" /><rect x="22" y="3" width="7" height="32" fill="#fff" /></svg>,
  <svg key="q" width="32" height="36" fill="none" stroke={S}><path d="M1 0v35h30" /><rect x="6" y="5" width="6" height="30" fill="#c8c8c8" /><rect x="14" y="12" width="6" height="23" fill="#c8c8c8" /><rect x="22" y="15" width="6" height="20" fill="#c8c8c8" /><path d="M1 32 10 16l9 12 10-16" /></svg>,
];

const listNames = ["最近", "模板", "柱形图", "折线图", "饼图", "条形图", "面积图", "X Y 散点图", "股价图", "曲面图", "雷达图", "树状图", "旭日图", "直方图", "箱形图", "瀑布图", "组合图"];

const bars = [
  ["行政部", 5170, 5263, 682],
  ["技术部", 4576, 7190, 589],
  ["教学部", 13954, 10071, 1087],
  ["人力资源部", 13157, 9519, 765],
  ["市场部", 12551, 9897, 630],
  ["学工部", 18297, 13053, 968],
];

function Preview() {
  const base = 862;
  const sc = 183.3 / 35000;
  const xs = [1409, 1451, 1493, 1534, 1576, 1617, 1659];
  return (
    <svg width="434" height="260" className="block">
      <g transform="translate(-1343,-667)" fontSize="11" fill="#6b6b6b">
        {[0, 5000, 10000, 15000, 20000, 25000, 30000, 35000].map((v) => (
          <g key={v}>
            <line x1="1388" x2="1680" y1={base - v * sc} y2={base - v * sc} stroke="#e4e4e4" />
            <text x="1378" y={base - v * sc + 4} textAnchor="end" fontSize="10" className="font-['Liberation_Sans']">{v}</text>
          </g>
        ))}
        {bars.map((b, i) => {
          const y1 = base - b[1] * sc;
          const y2 = y1 - b[2] * sc;
          const y3 = y2 - b[3] * sc;
          return (
            <g key={b[0]}>
              <rect x={xs[i] - 8} y={y1} width="16.500" height={base - y1} fill="#5b9bd5" />
              <rect x={xs[i] - 8} y={y2} width="16.500" height={y1 - y2} fill="#ed7d31" />
              <rect x={xs[i] - 8} y={y3} width="16.500" height={y2 - y3} fill="#a5a5a5" />
            </g>
          );
        })}
        {[...bars.map((b) => b[0]), "(空白)"].map((t, i) => (
          <text key={t} x={xs[i] + 4} y="874" textAnchor="end" transform={`rotate(-45 ${xs[i] + 4} 874)`}>{t}</text>
        ))}
        {[["求和项:误餐", "#a5a5a5", 776], ["求和项:住宿", "#ed7d31", 796], ["求和项:交通", "#5b9bd5", 816]].map(([t, c, y]) => (
          <g key={t}>
            <rect x="1699" y={y - 3} width="6" height="6" fill={c} />
            <text x="1708" y={y + 4} fontSize="10.500">{t}</text>
          </g>
        ))}
      </g>
    </svg>
  );
}

function Dialog() {
  return (
    <div className="absolute left-[1081px] top-[341px] w-[1257px] h-[1080px] bg-white border-2 border-[#6b6b6b] border-b-[3px] flex flex-col z-10">
      <div className="h-[55px] shrink-0 flex items-center pl-[12px] text-[24px] text-[#222]">
        <span className="flex-1">插入图表</span>
        <span className="mr-[73px] text-[26px] font-['Liberation_Sans',sans-serif]">?</span>
        <svg className="mr-[36px]" width="22" height="22"><path d="M1 1l20 20M21 1 1 21" stroke="#222" strokeWidth="1.600" /></svg>
      </div>
      <div className="flex-1 bg-[#f0f0f0] px-[11px] pt-[16px] flex flex-col">
        <div className="w-[111px] h-[34px] shrink-0 bg-white border border-b-0 border-[#d4d4d4] text-[24px] leading-[32px] text-[#222] text-center relative top-[1px] z-10">所有图表</div>
        <div className="w-[1229px] h-[893px] shrink-0 bg-white border border-[#d4d4d4] flex py-[22px]">
          <div className="w-[220px] shrink-0 border-r border-[#c6c6c6] pl-[21px]">
            {listNames.map((t, i) => (
              <div key={t} className={`h-[40px] w-[178px] flex items-center text-[24px] whitespace-nowrap ${i === 2 ? "bg-[#c6c6c6] text-[#333]" : "text-[#5f5f5f]"}`}>
                <div className="w-[46px] pl-[4px] shrink-0 flex items-center justify-start">{listIcons[i]}</div>
                <span className="ml-[11px]">{t}</span>
              </div>
            ))}
          </div>
          <div className="flex-1 flex flex-col pl-[20px]">
            <div className="flex h-[112px] -mt-[1px] shrink-0">
              {typeIcons.map((ic, i) => (
                <div key={i} className={`w-[112px] h-[112px] flex items-center justify-center ${i === 1 ? "bg-[#c6c6c6] border-2 border-dotted border-[#444]" : ""}`}>{ic}</div>
              ))}
            </div>
            <div className="ml-[2px] mt-[11px] w-[963px] border-t-2 border-[#c6c6c6] shrink-0" />
            <div className="ml-[2px] mt-[8px] h-[52px] leading-[52px] text-[34px] text-black shrink-0">堆积柱形图</div>
            <div className="mt-[5px] w-[450px] h-[276px] border-[8px] border-[#c6c6c6] shrink-0 bg-white">
              <Preview />
            </div>
          </div>
        </div>
        <div className="flex justify-end gap-[21px] mt-[11px] w-[1229px] text-[24px] text-[#222]">
          <div className="w-[135px] h-[50px] bg-[#e1e1e1] border-2 border-[#0078d7] text-center leading-[46px]">确定</div>
          <div className="w-[136px] h-[50px] bg-[#e1e1e1] border border-[#adadad] text-center leading-[48px]">取消</div>
        </div>
      </div>
      <svg className="absolute right-[3px] bottom-[2px]" width="18" height="18" fill="#c0c0c0">
        <rect x="12" y="0" width="4" height="4" /><rect x="6" y="6" width="4" height="4" /><rect x="12" y="6" width="4" height="4" />
        <rect x="0" y="12" width="4" height="4" /><rect x="6" y="12" width="4" height="4" /><rect x="12" y="12" width="4" height="4" />
      </svg>
    </div>
  );
}

const RedArrow = ({ x1, y1, x2, y2 }) => {
  const a = Math.atan2(y2 - y1, x2 - x1);
  const L = 22;
  const W = 9;
  const bx = x2 - L * Math.cos(a);
  const by = y2 - L * Math.sin(a);
  const p = `${x2},${y2} ${bx - W * Math.sin(a)},${by + W * Math.cos(a)} ${x2 - 15 * Math.cos(a)},${y2 - 15 * Math.sin(a)} ${bx + W * Math.sin(a)},${by - W * Math.cos(a)}`;
  return (
    <g>
      <line x1={x1} y1={y1} x2={bx + 6 * Math.cos(a)} y2={by + 6 * Math.sin(a)} stroke="#ed1c24" strokeWidth="3.500" />
      <polygon points={p} fill="#ed1c24" />
    </g>
  );
};

const Note = ({ className, children }) => (
  <div className={`absolute z-20 italic text-[#ed1c24] text-[30px] leading-[36px] whitespace-nowrap [-webkit-text-stroke:0.6px_#ed1c24] ${className}`}>{children}</div>
);

export default function App() {
  return (
    <div className="relative w-[2846px] h-[1468px] overflow-hidden flex flex-col bg-[#e6e6e6] font-['Liberation_Sans','Noto_Sans_CJK_SC',sans-serif]">
      <TabBar />
      <Ribbon />
      <FormulaBar />
      <div className="flex h-[1104px] shrink-0">
        <Sheet />
        <Panel />
      </div>
      <div className="flex-1 bg-[#f3f3f3] border-t-2 border-[#c6c6c6] flex">
        <div className="ml-[2282px] w-[65px] bg-[#c6c6c6]" />
      </div>
      <Dialog />
      <svg className="absolute left-0 top-0 z-20 pointer-events-none" width="2846" height="1468">
        <RedArrow x1={752} y1={758} x2={701} y2={733} />
        <RedArrow x1={1506} y1={173} x2={1470} y2={47} />
        <RedArrow x1={2119} y1={199} x2={2183} y2={141} />
        <RedArrow x1={1307} y1={440} x2={1261} y2={535} />
        <RedArrow x1={1587} y1={404} x2={1532} y2={469} />
        <RedArrow x1={2019} y1={1282} x2={2061} y2={1349} />
      </svg>
      <Note className="left-[775px] top-[743px]">1. 选中透视表</Note>
      <Note className="left-[1467px] top-[184px]">2. 选中</Note>
      <Note className="left-[2082px] top-[200px]">3. 点击</Note>
      <Note className="left-[1306px] top-[405px]">4. 选中</Note>
      <Note className="left-[1585px] top-[369px]">5. 选中, 堆积柱状图</Note>
      <Note className="left-[1949px] top-[1241px]">6. 点击, 确定</Note>
    </div>
  );
}
